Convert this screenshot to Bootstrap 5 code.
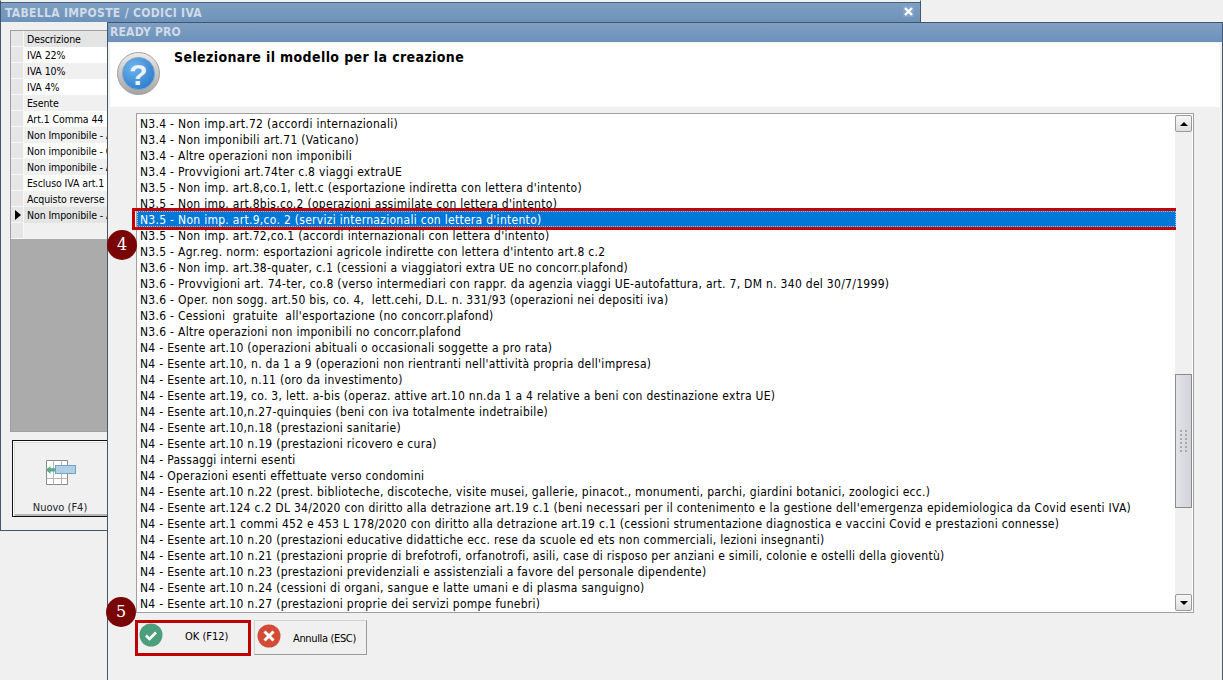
<!DOCTYPE html>
<html lang="it">
<head>
<meta charset="utf-8">
<title>Ready Pro</title>
<link rel="stylesheet" href="https://cdn.jsdelivr.net/npm/bootstrap@5.3.0/dist/css/bootstrap.min.css">
<style>
html,body{height:100%;margin:0;overflow:hidden}
body{background:#f0f0f0;font-family:"DejaVu Sans Condensed","DejaVu Sans",sans-serif;font-size:12px;line-height:16px;color:#000;letter-spacing:.29px}
.desk{position:relative;width:1223px;height:680px;overflow:hidden}
.win{position:absolute;background:#f0f0f0;border:1px solid #44566a;display:flex;flex-direction:column}
.win-back{left:0;top:0;width:921px;height:531px;border-top-color:#f0f0f0}
.win-front{left:107px;top:22px;width:1116px;height:659px}
.ttl{background:linear-gradient(#7f9fc3,#6d92ba);color:#d0dbe8;font-family:"DejaVu Sans Condensed","DejaVu Sans",sans-serif;font-weight:700;font-size:12px;line-height:19px;height:19px;padding-left:2px;flex:none;letter-spacing:.2px}
.win-back .ttl{margin-top:1px;height:20px;line-height:21px;padding-left:4px;border-top:1px solid #47617f;letter-spacing:.33px}
.closex{position:absolute;right:6px;top:5px;width:11px;height:11px;background:#86a4c6;display:flex;align-items:center;justify-content:center}
.grid-wrap{position:absolute;left:9px;top:29px;width:900px;height:402px;background:#ababab;border:1px solid #a0a0a0;font-size:10.5px;letter-spacing:-.1px}
.grow{display:flex;height:16px;background:#fff;white-space:nowrap;overflow:hidden}
.grow.alt{background:#f0f0f0}
.grow.hd,.grow.cur{background:#e4e4e4}
.gmark{width:13px;flex:none;background:#e6e6e6;border-right:1px solid #f7f7f7;border-bottom:1px solid #f7f7f7;position:relative}
.gtxt{padding:0 0 0 3px;flex:1}
.grow.cur .gmark::after{content:"";position:absolute;left:4px;top:3px;border-left:6px solid #000;border-top:5px solid transparent;border-bottom:5px solid transparent}
.nuovo{position:absolute;left:11px;top:439px;width:96px;height:77px;background:#f0f0f0;border:1px solid #111;box-shadow:inset 1px 1px 0 #fff,inset 2px 2px 0 #dcdcdc,inset 0 -2px 0 #b5b5b5;text-align:center;padding:17px 0 0;font-size:11px;line-height:14px;letter-spacing:0}
.nuovo svg{display:block;margin:0 auto 15px}
.nuovo span{display:block}
.hdr{background:#fff;height:64px;margin:1px 2px 0;flex:none;display:flex;padding-left:7px}
.hdr h1{font-family:"DejaVu Sans Condensed","DejaVu Sans",sans-serif;font-weight:700;font-size:14px;line-height:18px;margin:5px 0 0 14px;color:#000;letter-spacing:.38px}
.hdr svg{margin-top:9px}
.lst{position:absolute;left:28px;top:90px;width:1058px;height:500px;background:#fff;border:1px solid #a0a0a0;padding-top:1px;overflow:hidden}
.lst .list-group-item{border:0;border-radius:0;padding:1px 0 0 3px;height:16px;line-height:16px;font-size:12px;white-space:nowrap;background:transparent;color:#000;margin:0}
.lst .list-group-item.active{background:#0078d7;color:#fff;margin:0 17px 0 0;outline:1px dotted #9cc7ea;outline-offset:-1px}
.sb{position:absolute;right:1px;top:1px;bottom:1px;width:17px;background:#f0f0f0;display:flex;flex-direction:column;justify-content:space-between}
.sbb{height:17px;background:linear-gradient(#f7f7f7,#dedede);border:1px solid #9a9a9a;border-radius:2px;display:flex;align-items:center;justify-content:center}
.up{border-left:4px solid transparent;border-right:4px solid transparent;border-bottom:4px solid #000}
.dn{border-left:4px solid transparent;border-right:4px solid transparent;border-top:4px solid #000}
.thumb{position:absolute;left:0;top:259px;width:17px;height:134px;background:linear-gradient(90deg,#e2e3e8,#d3d4da);border:1px solid #8b8b8b;display:flex;align-items:center;justify-content:center}
.dots{width:7px;height:22px;background:radial-gradient(circle at 1px 1px,#a9a9a9 1px,transparent 1px) 0 0/5px 4px}
.redbox{position:absolute;border:3px solid #c00000;pointer-events:none}
.rb1{left:132px;top:208px;width:1044px;height:22px}
.rb2{left:135px;top:620px;width:116px;height:36px}
.wbtn{position:absolute;background:#f0f0f0;display:flex;align-items:center;padding:0;border:0;font-size:11px;color:#000;border-radius:0;letter-spacing:0}
.bok{left:138px;top:623px;width:110px;height:30px}
.bok svg{position:absolute;left:1px;top:0}
.bok span{position:absolute;left:47px;top:6px}
.ban{left:254px;top:620px;width:113px;height:35px;border:1px solid #d0d0d0;border-right-color:#9a9a9a;border-bottom-color:#9a9a9a}
.ban svg{position:absolute;left:2px;top:3px}
.ban span{position:absolute;left:38px;top:10px;letter-spacing:-.35px}
.num{position:absolute;width:30px;height:30px;border-radius:50%;background:#7a0506;color:#fff;font-family:"DejaVu Serif",serif;font-size:16px;line-height:30px;text-align:center;letter-spacing:0}
.n4{left:107px;top:230px}
.n5{left:106px;top:597px}
</style>
</head>
<body>
<div class="desk">
  <section class="win win-back">
    <div class="ttl">TABELLA IMPOSTE / CODICI IVA</div>
    <div class="closex"><svg width="9" height="9" viewBox="0 0 9 9"><path d="M1 1l7 7M8 1l-7 7" stroke="#fff" stroke-width="2.4"/></svg></div>
    <div class="grid-wrap">
      <div class="grow hd"><div class="gmark"></div><div class="gtxt">Descrizione</div></div>
      <div class="grow"><div class="gmark"></div><div class="gtxt">IVA 22%</div></div>
      <div class="grow alt"><div class="gmark"></div><div class="gtxt">IVA 10%</div></div>
      <div class="grow"><div class="gmark"></div><div class="gtxt">IVA 4%</div></div>
      <div class="grow alt"><div class="gmark"></div><div class="gtxt">Esente</div></div>
      <div class="grow"><div class="gmark"></div><div class="gtxt">Art.1 Comma 44</div></div>
      <div class="grow alt"><div class="gmark"></div><div class="gtxt">Non Imponibile - A</div></div>
      <div class="grow"><div class="gmark"></div><div class="gtxt">Non imponibile - C</div></div>
      <div class="grow alt"><div class="gmark"></div><div class="gtxt">Non imponibile - A</div></div>
      <div class="grow"><div class="gmark"></div><div class="gtxt">Escluso IVA art.1</div></div>
      <div class="grow alt"><div class="gmark"></div><div class="gtxt">Acquisto reverse</div></div>
      <div class="grow cur"><div class="gmark"></div><div class="gtxt">Non Imponibile - A</div></div>
      <div class="grow alt"><div class="gmark"></div><div class="gtxt"></div></div>
    </div>
    <button type="button" class="nuovo btn rounded-0">
      <svg width="32" height="26" viewBox="0 0 32 26"><path d="M2.500.5h21v24h-21z" fill="#fff" stroke="#8a8a8a"/><path d="M2.500 8.500h21M2.500 18.500h21M9.500.5v24M17.500.5v24" stroke="#b5b5b5" fill="none"/><rect x="11.500" y="5.500" width="20" height="8" fill="#b4cde6" stroke="#6aa8c8"/><path d="M2 10l4.500-4v2.500H11v3H6.500V14z" fill="#5aa98a"/></svg>
      <span>Nuovo (F4)</span>
    </button>
  </section>

  <section class="win win-front">
    <div class="ttl">READY PRO</div>
    <header class="hdr">
      <svg width="43" height="43" viewBox="0 0 44 44"><defs><radialGradient id="qb" cx=".35" cy=".3" r=".85"><stop offset="0" stop-color="#6fb4ec"/><stop offset="1" stop-color="#2477cc"/></radialGradient><linearGradient id="qr" x1="0" y1="0" x2="0" y2="1"><stop offset="0" stop-color="#ececec"/><stop offset="1" stop-color="#a4a4a4"/></linearGradient></defs><circle cx="22" cy="22" r="21.500" fill="url(#qr)" stroke="#a0a0a0"/><circle cx="22" cy="22" r="16.500" fill="url(#qb)" stroke="#8ca6bf"/><text x="22" y="33.500" text-anchor="middle" font-family="Liberation Sans,sans-serif" font-weight="700" font-size="31" fill="#eef3fa">?</text></svg>
      <h1>Selezionare il modello per la creazione</h1>
    </header>
    <div class="lst">
      <ul class="list-group">
        <li class="list-group-item">N3.4 - Non imp.art.72 (accordi internazionali)</li>
        <li class="list-group-item">N3.4 - Non imponibili art.71 (Vaticano)</li>
        <li class="list-group-item">N3.4 - Altre operazioni non imponibili</li>
        <li class="list-group-item">N3.4 - Provvigioni art.74ter c.8 viaggi extraUE</li>
        <li class="list-group-item">N3.5 - Non imp. art.8,co.1, lett.c (esportazione indiretta con lettera d'intento)</li>
        <li class="list-group-item">N3.5 - Non imp. art.8bis,co.2 (operazioni assimilate con lettera d'intento)</li>
        <li class="list-group-item active">N3.5 - Non imp. art.9,co. 2 (servizi internazionali con lettera d'intento)</li>
        <li class="list-group-item">N3.5 - Non imp. art.72,co.1 (accordi internazionali con lettera d'intento)</li>
        <li class="list-group-item">N3.5 - Agr.reg. norm: esportazioni agricole indirette con lettera d'intento art.8 c.2</li>
        <li class="list-group-item">N3.6 - Non imp. art.38-quater, c.1 (cessioni a viaggiatori extra UE no concorr.plafond)</li>
        <li class="list-group-item">N3.6 - Provvigioni art. 74-ter, co.8 (verso intermediari con rappr. da agenzia viaggi UE-autofattura, art. 7, DM n. 340 del 30/7/1999)</li>
        <li class="list-group-item">N3.6 - Oper. non sogg. art.50 bis, co. 4,&nbsp; lett.cehi, D.L. n. 331/93 (operazioni nei depositi iva)</li>
        <li class="list-group-item">N3.6 - Cessioni&nbsp; gratuite&nbsp; all'esportazione (no concorr.plafond)</li>
        <li class="list-group-item">N3.6 - Altre operazioni non imponibili no concorr.plafond</li>
        <li class="list-group-item">N4 - Esente art.10 (operazioni abituali o occasionali soggette a pro rata)</li>
        <li class="list-group-item">N4 - Esente art.10, n. da 1 a 9 (operazioni non rientranti nell'attività propria dell'impresa)</li>
        <li class="list-group-item">N4 - Esente art.10, n.11 (oro da investimento)</li>
        <li class="list-group-item">N4 - Esente art.19, co. 3, lett. a-bis (operaz. attive art.10 nn.da 1 a 4 relative a beni con destinazione extra UE)</li>
        <li class="list-group-item">N4 - Esente art.10,n.27-quinquies (beni con iva totalmente indetraibile)</li>
        <li class="list-group-item">N4 - Esente art.10,n.18 (prestazioni sanitarie)</li>
        <li class="list-group-item">N4 - Esente art.10 n.19 (prestazioni ricovero e cura)</li>
        <li class="list-group-item">N4 - Passaggi interni esenti</li>
        <li class="list-group-item">N4 - Operazioni esenti effettuate verso condomini</li>
        <li class="list-group-item">N4 - Esente art.10 n.22 (prest. biblioteche, discoteche, visite musei, gallerie, pinacot., monumenti, parchi, giardini botanici, zoologici ecc.)</li>
        <li class="list-group-item">N4 - Esente art.124 c.2 DL 34/2020 con diritto alla detrazione art.19 c.1 (beni necessari per il contenimento e la gestione dell'emergenza epidemiologica da Covid esenti IVA)</li>
        <li class="list-group-item">N4 - Esente art.1 commi 452 e 453 L 178/2020 con diritto alla detrazione art.19 c.1 (cessioni strumentazione diagnostica e vaccini Covid e prestazioni connesse)</li>
        <li class="list-group-item">N4 - Esente art.10 n.20 (prestazioni educative didattiche ecc. rese da scuole ed ets non commerciali, lezioni insegnanti)</li>
        <li class="list-group-item">N4 - Esente art.10 n.21 (prestazioni proprie di brefotrofi, orfanotrofi, asili, case di risposo per anziani e simili, colonie e ostelli della gioventù)</li>
        <li class="list-group-item">N4 - Esente art.10 n.23 (prestazioni previdenziali e assistenziali a favore del personale dipendente)</li>
        <li class="list-group-item">N4 - Esente art.10 n.24 (cessioni di organi, sangue e latte umani e di plasma sanguigno)</li>
        <li class="list-group-item">N4 - Esente art.10 n.27 (prestazioni proprie dei servizi pompe funebri)</li>
      </ul>
      <div class="sb">
        <div class="sbb"><i class="up"></i></div>
        <div class="thumb"><i class="dots"></i></div>
        <div class="sbb"><i class="dn"></i></div>
      </div>
    </div>
  </section>

  <button type="button" class="wbtn bok">
    <svg width="24" height="24" viewBox="0 0 24 24"><circle cx="12" cy="12" r="11.500" fill="#4c9f7c"/><path d="M7 12.500l3.500 3.500L17 9.500" fill="none" stroke="#fff" stroke-width="2.600"/></svg>
    <span>OK (F12)</span>
  </button>
  <button type="button" class="wbtn ban">
    <svg width="24" height="24" viewBox="0 0 24 24"><circle cx="12" cy="12" r="11.500" fill="#d14b36"/><path d="M7.500 7.500l9 9M16.500 7.500l-9 9" fill="none" stroke="#fff" stroke-width="3"/></svg>
    <span>Annulla (ESC)</span>
  </button>
  <div class="redbox rb1"></div>
  <div class="redbox rb2"></div>
  <div class="num n4">4</div>
  <div class="num n5">5</div>
</div>
</body>
</html>
